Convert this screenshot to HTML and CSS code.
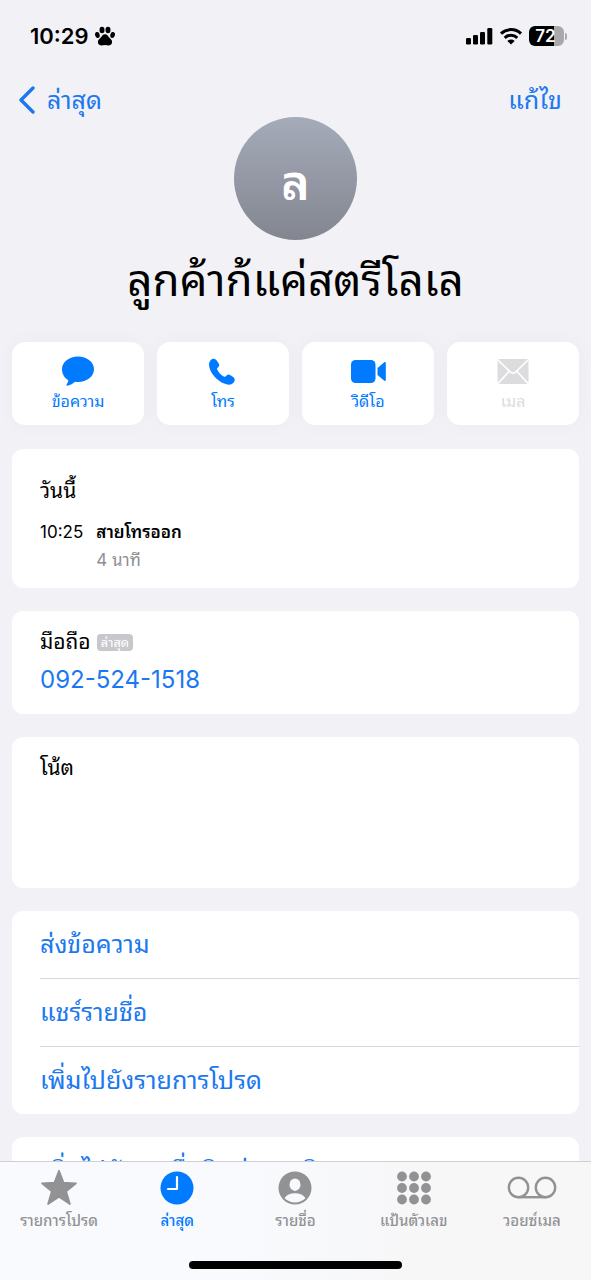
FILE: index.html
```html
<!DOCTYPE html>
<html lang="th">
<head>
<meta charset="utf-8">
<meta name="viewport" content="width=device-width, initial-scale=1">
<title>ลูกค้าก้แค่สตรีโลเล</title>
<link rel="stylesheet" href="styles.css">
</head>
<body>
<div class="status">
  <div class="status-group">
    <span class="clock">10:29</span>
    <svg width="20" height="20" viewBox="0 0 20 20" aria-hidden="true">
      <ellipse cx="7" cy="4" rx="2.5" ry="3.3"/><ellipse cx="13" cy="4" rx="2.5" ry="3.3"/>
      <ellipse cx="2.4" cy="9" rx="2.3" ry="3" transform="rotate(-15 2.4 9)"/><ellipse cx="17.6" cy="9" rx="2.3" ry="3" transform="rotate(15 17.6 9)"/>
      <path d="M10 8.200c2.200 0 3 1.800 4.200 3.400 1.200 1.500 2.900 2.300 2.900 4.500 0 2-1.400 3.300-3.200 3.300-1.400 0-2.500-.5-3.900-.5s-2.500.5-3.900.5c-1.800 0-3.200-1.300-3.200-3.300 0-2.200 1.700-3 2.900-4.500C7 10 7.800 8.200 10 8.200z"/>
    </svg>
  </div>
  <div class="status-group">
    <svg width="28" height="18" viewBox="0 0 28 18" aria-hidden="true">
      <rect x="1" y="11" width="5" height="6.500" rx="1.300"/><rect x="8" y="8" width="5" height="9.500" rx="1.300"/><rect x="15" y="5" width="5" height="12.500" rx="1.300"/><rect x="22.300" y="1" width="5" height="16.500" rx="1.300"/>
    </svg>
    <svg width="24" height="18" viewBox="0 0 24 18" aria-hidden="true">
      <path d="M2 6.600a14.500 14.500 0 0 1 20 0M5.700 10.800a9.200 9.200 0 0 1 12.600 0" fill="none" stroke="#000" stroke-width="3"/>
      <path d="M12 17.500 8.300 13.900a5.400 5.400 0 0 1 7.400 0z"/>
    </svg>
    <span class="battery"><span class="battery-body">72</span><span class="battery-tip"></span></span>
  </div>
</div>
<header class="nav">
  <button class="link back" type="button">
    <svg width="18" height="28" viewBox="0 0 18 28" aria-hidden="true"><path d="M15 2 3 14l12 12" fill="none" stroke="currentColor" stroke-width="3.400" stroke-linecap="round" stroke-linejoin="round"/></svg>
    <span>ล่าสุด</span>
  </button>
  <button class="link" type="button">แก้ไข</button>
</header>
<main class="content">
  <div class="avatar">ล</div>
  <h1 class="name">ลูกค้าก้แค่สตรีโลเล</h1>
  <div class="actions">
    <button class="action" type="button">
      <svg width="34" height="32" viewBox="0 0 34 32" aria-hidden="true"><path d="M17 1.500c9 0 16 5.600 16 12.700S26 27 17 27c-1 0-2-.1-3-.2-1.900 1.700-4.600 3.400-7.500 3.900-1 .1-1.400-.8-.8-1.500 1-1.100 1.500-2.500 1.500-4.100C3.300 22.800 1 18.800 1 14.200 1 7.100 8 1.500 17 1.500z"/></svg>
      <span>ข้อความ</span>
    </button>
    <button class="action" type="button">
      <svg width="34" height="32" viewBox="2 0 34 32" aria-hidden="true"><path d="M7.300 4.600c1.700-1.500 4-1.100 5.200.6l2.200 3.200c.8 1.200.7 2.400-.3 3.500l-1 1.100c-.5.500-.5 1.100-.1 1.700 1.900 3.300 3.500 5 6.500 6.900.6.400 1.200.3 1.700-.2l1.100-1c1.100-1 2.300-1.100 3.500-.3l3 2c1.800 1.200 2.200 3.400.8 5.100-2.400 2.900-5.600 3.200-9.700 1.400-7-3.100-13-9.500-14.800-16.200-.9-3.300-.2-6 1.900-7.800z"/></svg>
      <span>โทร</span>
    </button>
    <button class="action" type="button">
      <svg width="36" height="32" viewBox="-1 0 36 32" aria-hidden="true"><rect x="0" y="5" width="24.500" height="23" rx="4.500"/><path d="m26.500 13 6.500-5.600c.8-.7 1.800-.3 1.800.7v16.800c0 1-1 1.400-1.800.7L26.500 20z"/></svg>
      <span>วิดีโอ</span>
    </button>
    <button class="action" type="button" disabled>
      <svg width="34" height="32" viewBox="0 0 34 32" aria-hidden="true"><rect x="1.500" y="4" width="31" height="25" rx="2"/><path d="m2 5 12.500 12.200c1.600 1.500 3.400 1.500 5 0L32 5M2 28.500l11-12M32 28.500l-11-12" fill="none" stroke="#fff" stroke-width="1.700"/></svg>
      <span>เมล</span>
    </button>
  </div>
  <section class="card calls">
    <h2 class="label">วันนี้</h2>
    <div class="call">
      <time>10:25</time>
      <div><strong>สายโทรออก</strong><p class="duration">4 นาที</p></div>
    </div>
  </section>
  <section class="card phone">
    <div class="phone-head"><h2 class="label">มือถือ</h2><span class="badge">ล่าสุด</span></div>
    <a class="number" href="tel:0925241518">092-524-1518</a>
  </section>
  <section class="card note"><h2 class="label">โน้ต</h2></section>
  <section class="card list">
    <button class="row" type="button">ส่งข้อความ</button>
    <button class="row" type="button">แชร์รายชื่อ</button>
    <button class="row" type="button">เพิ่มไปยังรายการโปรด</button>
  </section>
  <section class="card list">
    <button class="row" type="button">เพิ่มไปยังรายชื่อติดต่อฉุกเฉิน</button>
  </section>
</main>
<footer class="bottom">
  <nav class="tabs">
    <a class="tab" href="#favorites"><svg width="36" height="36" viewBox="0 0 36 36" aria-hidden="true"><path d="m18 .8 4.600 11.900 12.400.6-9.800 8.100L28.900 34 18 26.800 7.100 34l3.700-12.600L1 13.300l12.400-.6z" stroke="currentColor" stroke-width="1.800" stroke-linejoin="round"/></svg><span>รายการโปรด</span></a>
    <a class="tab active" href="#recents" aria-current="page"><svg width="36" height="36" viewBox="0 0 36 36" aria-hidden="true"><circle cx="18" cy="18" r="16.500"/><path d="M18 7v12H9" fill="none" stroke="#fff" stroke-width="2.200" stroke-linecap="round" stroke-linejoin="round"/></svg><span>ล่าสุด</span></a>
    <a class="tab" href="#contacts"><svg width="36" height="36" viewBox="0 0 36 36" aria-hidden="true"><circle cx="18" cy="18" r="16.500"/><ellipse cx="18" cy="14.700" rx="5.500" ry="6.200" fill="#f8f9fc"/><path d="M7.500 28.300c2-3.200 5.800-5 10.500-5s8.500 1.800 10.500 5C25.600 31 22 32.500 18 32.500S10.400 31 7.500 28.300z" fill="#f8f9fc"/></svg><span>รายชื่อ</span></a>
    <a class="tab" href="#keypad"><svg width="36" height="36" viewBox="0 0 36 36" aria-hidden="true"><circle cx="6" cy="6.500" r="4.900"/><circle cx="18" cy="6.500" r="4.900"/><circle cx="30" cy="6.500" r="4.900"/><circle cx="6" cy="18" r="4.900"/><circle cx="18" cy="18" r="4.900"/><circle cx="30" cy="18" r="4.900"/><circle cx="6" cy="29.500" r="4.900"/><circle cx="18" cy="29.500" r="4.900"/><circle cx="30" cy="29.500" r="4.900"/></svg><span>แป้นตัวเลข</span></a>
    <a class="tab" href="#voicemail"><svg width="50" height="36" viewBox="0 0 50 36" aria-hidden="true"><g fill="none" stroke="currentColor" stroke-width="2.400"><circle cx="11.500" cy="17.500" r="9.700"/><circle cx="38.500" cy="17.500" r="9.700"/><path d="M11.500 27.200h27"/></g></svg><span>วอยซ์เมล</span></a>
  </nav>
  <div class="home"></div>
</footer>
</body>
</html>
```

FILE: styles.css
```css
* {
  box-sizing: border-box;
}

body {
  margin: 0;
  height: 100vh;
  display: flex;
  flex-direction: column;
  overflow: hidden;
  background: #f1f1f6;
  color: #000;
  font-family: Inter, "Noto Sans Thai Looped", "Noto Looped Thai", Loma, Garuda, Waree, Thonburi, "Droid Sans Thai", "Noto Sans Thai", "Noto Sans", sans-serif;
}

button {
  border: 0;
  background: none;
  padding: 0;
  font: inherit;
  color: inherit;
}

svg {
  display: block;
  fill: currentColor;
}

h1,
h2,
p {
  margin: 0;
}

.status {
  flex: none;
  height: 72px;
  padding: 0 24px 0 30px;
  display: flex;
  align-items: center;
  justify-content: space-between;
}

.status-group {
  display: flex;
  align-items: center;
  gap: 6px;
}

.clock {
  font-size: 22px;
  font-weight: 600;
  line-height: 28px;
}

.battery {
  display: flex;
  align-items: center;
  gap: 1px;
}

.battery-body {
  width: 35px;
  height: 20px;
  padding-right: 2px;
  border-radius: 6px;
  background: linear-gradient(to right, #000 72%, #a9a9ad 72%);
  color: #fff;
  font-size: 17px;
  font-weight: 600;
  line-height: 20px;
  text-align: center;
}

.battery-tip {
  width: 2px;
  height: 7px;
  border-radius: 0 2px 2px 0;
  background: #a9a9ad;
}

.nav {
  flex: none;
  height: 45px;
  padding: 11px 29px 0 18px;
  display: flex;
  align-items: center;
  justify-content: space-between;
}

.link {
  color: #1b78f0;
  font-size: 25px;
  line-height: 32px;
}

.back {
  display: flex;
  align-items: center;
  gap: 11px;
}

.content {
  flex: 1;
  min-height: 0;
  overflow-y: auto;
  scrollbar-width: none;
  padding: 0 12px;
}

.avatar {
  width: 123px;
  height: 123px;
  margin: 0 auto;
  border-radius: 50%;
  background: linear-gradient(#a5abb9, #838690);
  color: #fff;
  font-size: 48px;
  font-weight: 600;
  line-height: 132px;
  text-align: center;
}

.name {
  font-size: 44px;
  font-weight: 400;
  line-height: 80px;
  text-align: center;
  white-space: nowrap;
}

.actions {
  display: grid;
  grid-template-columns: repeat(4, 1fr);
  gap: 13px;
  margin: 22px 0 24px;
}

.action {
  height: 83px;
  display: flex;
  flex-direction: column;
  align-items: center;
  padding-top: 13px;
  border-radius: 13px;
  background: #fff;
  box-shadow: 0 0 20px rgba(0, 0, 0, 0.03);
  color: #007aff;
  font-size: 16px;
  line-height: 28px;
}

.action:disabled {
  color: #dcdcde;
}

.card {
  margin-bottom: 23px;
  padding: 0 28px;
  border-radius: 11px;
  background: #fff;
}

.label {
  font-size: 21px;
  font-weight: 400;
  line-height: 32px;
}

.calls {
  height: 139px;
  padding-top: 26px;
}

.call {
  display: flex;
  gap: 13px;
  margin-top: 11px;
  font-size: 17px;
  line-height: 28px;
}

.call strong {
  font-weight: 600;
}

.duration {
  color: #8e8e93;
}

.phone {
  height: 103px;
  padding-top: 15px;
}

.phone-head {
  display: flex;
  align-items: center;
  gap: 6px;
}

.badge {
  padding: 0 4px;
  border-radius: 4px;
  background: #c7c7cc;
  color: #fff;
  font-size: 13px;
  line-height: 17px;
}

.number {
  display: block;
  margin-top: 6px;
  color: #1b78f0;
  font-size: 24px;
  line-height: 32px;
  text-decoration: none;
}

.note {
  height: 151px;
  padding-top: 15px;
}

.list {
  padding-right: 0;
}

.row {
  display: block;
  width: 100%;
  box-sizing: content-box;
  color: #1b78f0;
  font-size: 25px;
  line-height: 67px;
  text-align: left;
  white-space: nowrap;
}

.row + .row {
  border-top: 1px solid #d8d8dc;
}

.bottom {
  flex: none;
  height: 119px;
  border-top: 1px solid #cfd0d6;
  background: linear-gradient(to right, #f8fafd 40%, #f7f7f8 70%);
  display: flex;
  flex-direction: column;
  justify-content: space-between;
  align-items: center;
  padding: 8px 0 11px;
}

.tabs {
  width: 100%;
  display: grid;
  grid-template-columns: repeat(5, 1fr);
}

.tab {
  display: flex;
  flex-direction: column;
  align-items: center;
  color: #929295;
  font-size: 15px;
  font-weight: 500;
  line-height: 30px;
  text-decoration: none;
  white-space: nowrap;
}

.active {
  color: #007aff;
}

.home {
  width: 36%;
  height: 8px;
  border-radius: 4px;
  background: #000;
}
```
